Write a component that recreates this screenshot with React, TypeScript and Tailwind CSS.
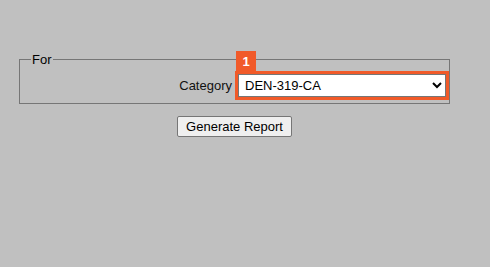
import React from "react";

export default function App() {
  return (
    <div className="min-h-[267px] w-[490px] bg-[#c0c0c0] pt-[52px] font-['Liberation_Sans',Arial,sans-serif] text-[13px] text-black">
      <div className="ml-[19px] flex w-[431px] flex-col items-center">
        <fieldset className="w-full border border-[#767676] pb-[6px] pl-[11px] pr-[3px]">
          <legend className="px-[1px] leading-[15px]">For</legend>
          <div className="mt-[7px] flex items-center justify-end gap-[6px]">
            <label htmlFor="category" className="leading-[15px] text-[#111]">
              Category
            </label>
            <div className="relative">
              <span className="absolute left-[-2px] top-[-23px] flex h-[20px] w-[20px] items-center justify-center bg-[#f15a29] text-[13px] font-bold leading-none text-white">
                1
              </span>
              <select
                id="category"
                defaultValue="DEN-319-CA"
                className="h-[23px] w-[208px] border border-[#767676] bg-white pl-[2px] text-[13px] outline outline-[3px] outline-[#f15a29]"
              >
                <option>DEN-319-CA</option>
              </select>
            </div>
          </div>
        </fieldset>
        <button className="mt-[12px] h-[21px] rounded-[2px] border border-[#767676] bg-[#efefef] px-[8px] text-[13px] leading-none">
          Generate Report
        </button>
      </div>
    </div>
  );
}
